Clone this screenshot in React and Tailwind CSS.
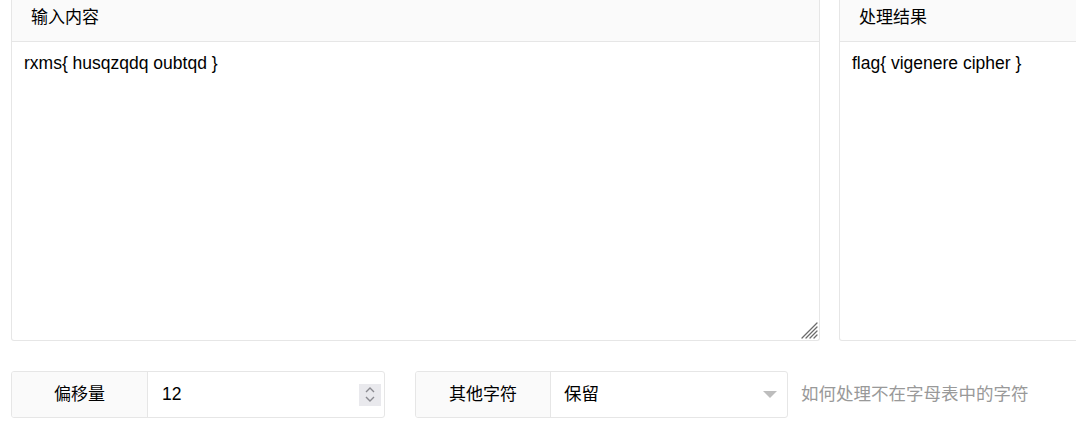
import React from "react";

const font = { fontFamily: '"Liberation Sans", Arial, "Noto Sans CJK SC", sans-serif' };

export default function App() {
  return (
    <div className="w-[1076px] h-[434px] overflow-hidden bg-white text-black" style={font}>
      <div className="flex pl-[11px] gap-[19px]">
        <div className="w-[809px] shrink-0 flex flex-col border-x border-b border-[#e6e6e6] rounded-b-[3px]">
          <div className="h-[42px] bg-[#fafafa] border-b border-[#e6e6e6] flex items-center pl-[19px] pb-[5px] text-[17px]">
            输入内容
          </div>
          <div className="relative h-[298px]">
            <textarea
              className="h-full w-full px-[12px] py-[8px] text-[17.5px] leading-[26px] outline-none resize-none text-black block"
              defaultValue="rxms{ husqzqdq oubtqd }"
            />
            <svg className="absolute right-[1px] bottom-[1px]" width="18" height="18" viewBox="0 0 18 18">
              <g stroke="#6b6b6b" strokeWidth="1.3" strokeLinecap="round">
                <path d="M2 17 L17 2" />
                <path d="M6 17 L17 6" />
                <path d="M10 17 L17 10" />
                <path d="M14 17 L17 14" />
              </g>
            </svg>
          </div>
        </div>
        <div className="w-[400px] shrink-0 flex flex-col border-x border-b border-[#e6e6e6] rounded-b-[3px]">
          <div className="h-[42px] bg-[#fafafa] border-b border-[#e6e6e6] flex items-center pl-[19px] pb-[5px] text-[17px]">
            处理结果
          </div>
          <div className="h-[298px] px-[12px] py-[8px] text-[17.5px] leading-[26px]">
            flag{"{"} vigenere cipher {"}"}
          </div>
        </div>
      </div>

      <div className="flex items-center mt-[30px] pl-[11px]">
        <div className="w-[374px] h-[47px] flex border border-[#e6e6e6] rounded-[3px] overflow-hidden">
          <div className="w-[136px] bg-[#fafafa] border-r border-[#e6e6e6] flex items-center justify-center text-[17px]">
            偏移量
          </div>
          <div className="flex-1 flex items-center pl-[14px] pr-[3px] text-[17.5px]">
            <span className="flex-1">12</span>
            <div className="w-[22px] h-[22px] bg-[#e9e9ed] flex flex-col items-center justify-center gap-[3px]">
              <svg width="10" height="6" viewBox="0 0 10 6">
                <path d="M1 5 L5 1 L9 5" fill="none" stroke="#8a8a90" strokeWidth="1.4" />
              </svg>
              <svg width="10" height="6" viewBox="0 0 10 6">
                <path d="M1 1 L5 5 L9 1" fill="none" stroke="#8a8a90" strokeWidth="1.4" />
              </svg>
            </div>
          </div>
        </div>

        <div className="ml-[30px] w-[373px] h-[47px] flex border border-[#e6e6e6] rounded-[3px] overflow-hidden">
          <div className="w-[135px] bg-[#fafafa] border-r border-[#e6e6e6] flex items-center justify-center text-[17px]">
            其他字符
          </div>
          <div className="flex-1 flex items-center pl-[13px] pr-[10px] text-[17.5px]">
            <span className="flex-1">保留</span>
            <svg width="14" height="8" viewBox="0 0 14 8">
              <path d="M0 0 L14 0 L7 7 Z" fill="#bdbdbd" />
            </svg>
          </div>
        </div>

        <div className="ml-[13px] text-[17.5px] text-[#999999] whitespace-nowrap">如何处理不在字母表中的字符</div>
      </div>
    </div>
  );
}
